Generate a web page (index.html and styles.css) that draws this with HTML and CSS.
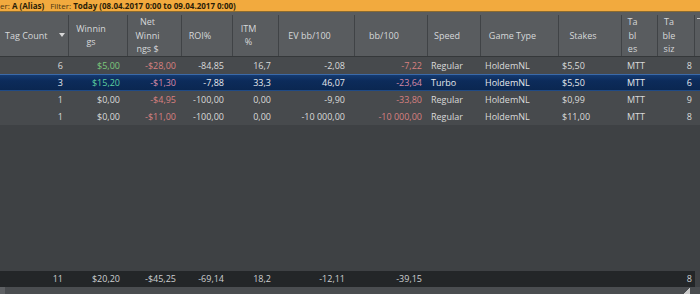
FILE: index.html
```html
<!DOCTYPE html>
<html>
<head>
<meta charset="utf-8">
<link rel="stylesheet" href="styles.css">
</head>
<body>
<div class="app">
  <div class="filterbar"><span class="lbl">er:</span> <b>A (Alias)</b><span class="lbl gap">Filter:</span> <b>Today (08.04.2017 0:00 to 09.04.2017 0:00)</b></div>
  <div class="header row-grid">
    <div class="hcell first"><span>Tag Count</span><svg class="sort" width="6" height="4" viewBox="0 0 6 4"><path d="M0 0H6L3 4Z" fill="#d8d8d8"/></svg></div>
    <div class="hcell"><span>Winnin<br>gs</span></div>
    <div class="hcell"><span>Net<br>Winni<br>ngs $</span></div>
    <div class="hcell"><span>ROI%</span></div>
    <div class="hcell"><span>ITM<br>%</span></div>
    <div class="hcell"><span>EV bb/100</span></div>
    <div class="hcell"><span>bb/100</span></div>
    <div class="hcell"><span>Speed</span></div>
    <div class="hcell"><span>Game Type</span></div>
    <div class="hcell"><span>Stakes</span></div>
    <div class="hcell"><span>Ta<br>bl<br>es</span></div>
    <div class="hcell"><span>Ta<br>ble<br>siz</span></div>
    <div class="hscroll"><span class="dash"></span></div>
  </div>
  <div class="body">
    <div class="row row-grid">
      <div class="c num">6</div><div class="c num pos">$5,00</div><div class="c num neg">-$28,00</div><div class="c num">-84,85</div><div class="c num">16,7</div><div class="c num">-2,08</div><div class="c num neg">-7,22</div><div class="c txt">Regular</div><div class="c txt">HoldemNL</div><div class="c txt">$5,50</div><div class="c txt">MTT</div><div class="c num">8</div><div></div>
    </div>
    <div class="row row-grid sel">
      <div class="c num">3</div><div class="c num pos">$15,20</div><div class="c num neg">-$1,30</div><div class="c num">-7,88</div><div class="c num">33,3</div><div class="c num">46,07</div><div class="c num neg">-23,64</div><div class="c txt">Turbo</div><div class="c txt">HoldemNL</div><div class="c txt">$5,50</div><div class="c txt">MTT</div><div class="c num">6</div><div></div>
    </div>
    <div class="row row-grid">
      <div class="c num">1</div><div class="c num">$0,00</div><div class="c num neg">-$4,95</div><div class="c num">-100,00</div><div class="c num">0,00</div><div class="c num">-9,90</div><div class="c num neg">-33,80</div><div class="c txt">Regular</div><div class="c txt">HoldemNL</div><div class="c txt">$0,99</div><div class="c txt">MTT</div><div class="c num">9</div><div></div>
    </div>
    <div class="row row-grid">
      <div class="c num">1</div><div class="c num">$0,00</div><div class="c num neg">-$11,00</div><div class="c num">-100,00</div><div class="c num">0,00</div><div class="c num">-10 000,00</div><div class="c num neg">-10 000,00</div><div class="c txt">Regular</div><div class="c txt">HoldemNL</div><div class="c txt">$11,00</div><div class="c txt">MTT</div><div class="c num">8</div><div></div>
    </div>
  </div>
  <div class="totals row-grid">
    <div class="c num">11</div><div class="c num">$20,20</div><div class="c num">-$45,25</div><div class="c num">-69,14</div><div class="c num">18,2</div><div class="c num">-12,11</div><div class="c num">-39,15</div><div class="c"></div><div class="c"></div><div class="c"></div><div class="c"></div><div class="c num">8</div><div class="tscroll"></div>
  </div>
  <div class="hbar"><div class="hbtn"></div><div class="grip"></div></div>
</div>
</body>
</html>
```
FILE: styles.css
```css
html, body {
  margin: 0;
  padding: 0;
  background: #3e4144;
}
.app {
  width: 700px;
  height: 294px;
  overflow: hidden;
  display: flex;
  flex-direction: column;
  font-family: "Open Sans", "Noto Sans", sans-serif;
  font-size: 9px;
  color: #dadada;
}
.filterbar {
  height: 11px;
  line-height: 11px;
  background: #f2aa3e;
  color: #2a1d08;
  font-size: 8px;
  white-space: nowrap;
  border-bottom: 1px solid #8a6a30;
}
.filterbar .lbl { color: #4a3510; }
.filterbar .gap { margin-left: 6px; }
.row-grid {
  display: grid;
  grid-template-columns: 69px 59px 54px 51px 46px 76px 73px 53px 78px 63px 36px 37px 5px;
}
.header {
  height: 44px;
  background: #595c5f;
  color: #d6d8da;
  line-height: 13.5px;
  border-bottom: 1px solid #35383a;
}
.hcell {
  margin: 3px 0;
  border-right: 1px solid #404346;
  display: flex;
  align-items: center;
  justify-content: center;
  padding-right: 14px;
  text-align: center;
}
.hcell.first {
  justify-content: flex-start;
  padding-left: 5px;
  padding-right: 0;
}
.hcell.first .sort { margin-left: 11px; }
.hscroll { position: relative; }
.hscroll .dash {
  display: block;
  width: 3px;
  height: 1px;
  background: #c8c8c8;
  margin: 6px 0 0 2px;
}
.body {
  flex: 1;
  background: #3e4144;
}
.row {
  height: 17px;
  line-height: 17px;
  background: #474a4d;
}
.row.sel {
  background: linear-gradient(#153d76, #0c2b5a 40%, #0a2650);
  box-shadow: inset 0 1px 0 #3c6aa8, inset 0 -1px 0 #1f4a85;
  color: #e6e8ec;
}
.c { white-space: nowrap; overflow: visible; }
.num { text-align: right; padding-right: 6px; }
.txt { text-align: left; padding-left: 4px; }
.row-grid > .c:nth-child(2) { padding-right: 8px; }
.row-grid > .c:nth-child(4) { padding-right: 9px; }
.row-grid > .c:nth-child(5) { padding-right: 8px; }
.row-grid > .c:nth-child(6) { padding-right: 10px; }
.row-grid > .c:nth-child(8) { padding-left: 3px; }
.row-grid > .c:nth-child(10) { padding-left: 3px; }
.row-grid > .c:nth-child(11) { padding-left: 5px; }
.row-grid > .c:nth-child(12) { padding-right: 3px; }
.pos { color: #7cc97c; }
.neg { color: #d98080; }
.sel .pos { color: #5fd0a0; }
.sel .neg { color: #d88aa6; }
.totals {
  height: 16px;
  line-height: 16px;
  background: #232628;
  color: #cdcfd1;
}
.tscroll { background: #3e4144; }
.hbar {
  height: 7px;
  background: #4a4d50;
  display: flex;
  justify-content: space-between;
}
.hbtn { width: 5px; background: #5e6164; }
.grip {
  width: 6px;
  margin-right: 10px;
  background: linear-gradient(135deg, transparent 50%, #c8c8c8 50%);
}
```
